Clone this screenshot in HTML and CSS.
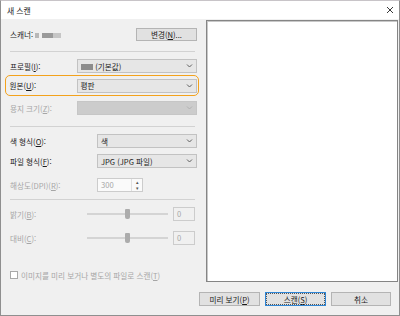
FILE: index.html
```html
<!DOCTYPE html>
<html lang="ko">
<head>
    <meta charset="UTF-8">
    <title>새 스캔</title>
    <link rel="stylesheet" href="styles.css">
</head>
<body>
    <div class="window">
        <div class="titlebar">
            <span class="title">새 스캔</span>
            <svg class="close" width="8" height="8" viewBox="0 0 8 8"><path d="M1 1l6 6M7 1l-6 6" stroke="#222" stroke-width="0.9" fill="none"/></svg>
        </div>
        <div class="main">
            <div class="settings">
                <div class="row scanner-row">
                    <span class="label">스캐너: <span class="blur-name"></span></span>
                    <button class="btn change-btn">변경(<u>N</u>)...</button>
                </div>
                <div class="sep"></div>

                <div class="row field">
                    <span class="label col-a">프로필(<u>I</u>):</span>
                    <div class="select"><span class="value"><span class="blur-block"></span> (기본값)</span><svg class="chev" width="7" height="4" viewBox="0 0 7 4"><path d="M1 .5l2.5 2.5L6 .5" stroke="#606060" fill="none"/></svg></div>
                </div>
                <div class="row highlight">
                    <span class="label col-a">원본(<u>U</u>):</span>
                    <div class="select"><span class="value">평판</span><svg class="chev" width="7" height="4" viewBox="0 0 7 4"><path d="M1 .5l2.5 2.5L6 .5" stroke="#606060" fill="none"/></svg></div>
                </div>
                <div class="row field paper-row">
                    <span class="label col-a disabled">용지 크기(<u>Z</u>):</span>
                    <div class="select off"><span class="value"></span><svg class="chev" width="7" height="4" viewBox="0 0 7 4"><path d="M1 .5l2.5 2.5L6 .5" stroke="#b0b0b0" fill="none"/></svg></div>
                </div>
                <div class="sep sep-2"></div>

                <div class="row field color-row">
                    <span class="label col-b">색 형식(<u>O</u>):</span>
                    <div class="select"><span class="value">색</span><svg class="chev" width="7" height="4" viewBox="0 0 7 4"><path d="M1 .5l2.5 2.5L6 .5" stroke="#606060" fill="none"/></svg></div>
                </div>
                <div class="row field file-row">
                    <span class="label col-b">파일 형식(<u>F</u>):</span>
                    <div class="select"><span class="value">JPG (JPG 파일)</span><svg class="chev" width="7" height="4" viewBox="0 0 7 4"><path d="M1 .5l2.5 2.5L6 .5" stroke="#606060" fill="none"/></svg></div>
                </div>
                <div class="row field dpi-row">
                    <span class="label col-b disabled">해상도(DPI)(<u>R</u>):</span>
                    <div class="spin">
                        <span class="spin-value">300</span>
                        <span class="spin-btns"><span>&#9652;</span><span>&#9662;</span></span>
                    </div>
                </div>
                <div class="sep sep-3"></div>

                <div class="row field bright-row">
                    <span class="label col-c disabled">밝기(<u>B</u>):</span>
                    <div class="slider"><span class="thumb"></span></div>
                    <div class="numbox">0</div>
                </div>
                <div class="row field contrast-row">
                    <span class="label col-c disabled">대비(<u>C</u>):</span>
                    <div class="slider"><span class="thumb"></span></div>
                    <div class="numbox">0</div>
                </div>

                <div class="row check-row">
                    <span class="checkbox"></span>
                    <span class="label disabled">이미지를 미리 보거나 별도의 파일로 스캔(<u>T</u>)</span>
                </div>
            </div>
            <div class="preview"></div>
        </div>
        <div class="footer">
            <button class="btn">미리 보기(<u>P</u>)</button>
            <button class="btn focused">스캔(<u>S</u>)</button>
            <button class="btn">취소</button>
        </div>
    </div>
</body>
</html>
```

FILE: styles.css
```css
body {
    margin: 0;
    padding: 0;
    background-color: #ffffff;
    font-family: "Noto Sans CJK KR", "Noto Sans", sans-serif;
    font-size: 7.6px;
    color: #1a1a1a;
}

.window {
    width: 400px;
    height: 316px;
    box-sizing: border-box;
    border: 1px solid #8f8f8f;
    border-top-color: #c8c4c8;
    background-color: #f0f0f0;
    display: flex;
    flex-direction: column;
}

.titlebar {
    height: 18px;
    background-color: #ffffff;
    display: flex;
    align-items: center;
    justify-content: space-between;
    padding: 0 5px 0 6px;
}

.title {
    font-size: 7.8px;
}

.close {
    display: block;
}

.main {
    height: 264px;
    display: flex;
}

.settings {
    width: 205px;
    box-sizing: border-box;
    padding: 8px 9px 0 9px;
    display: flex;
    flex-direction: column;
}

.row {
    display: flex;
    align-items: center;
}

.label {
    white-space: nowrap;
}

.label u,
.btn u {
    text-decoration-thickness: 0.5px;
    text-underline-offset: 1px;
}

.disabled {
    color: #a6a6a6;
}

.col-a { width: 67px; }
.col-b { width: 87px; }
.col-c { width: 77px; }

.scanner-row {
    height: 15px;
    justify-content: space-between;
}

.blur-name {
    display: inline-block;
    width: 26px;
    height: 5px;
    vertical-align: middle;
    background: linear-gradient(to right, #b8b8b8 0 14%, transparent 14% 26%, #9a9a9a 26% 70%, #c6c6c6 70% 100%);
    filter: blur(0.6px);
}

.btn {
    font-family: inherit;
    font-size: 7.6px;
    color: #1a1a1a;
    background-color: #e1e1e1;
    border: 1px solid #b4b4b4;
    padding: 0;
    height: 14px;
    width: 61px;
    box-sizing: border-box;
}

.change-btn {
    height: 13px;
}

.sep {
    height: 0;
    border-top: 1px solid #d2d2d2;
    margin-top: 9px;
    margin-right: 2px;
}

.sep-2 { margin-top: 11px; }
.sep-3 { margin-top: 7px; }

.field {
    height: 14px;
    margin-top: 7px;
}

.select {
    flex: 1;
    height: 14px;
    box-sizing: border-box;
    background-color: #e6e6e6;
    border: 1px solid #c2c2c2;
    display: flex;
    align-items: center;
    justify-content: space-between;
    padding: 0 3px 0 3px;
}

.select.off {
    background-color: #cccccc;
    border-color: #c6c6c6;
}

.chev {
    display: block;
}

.blur-block {
    display: inline-block;
    width: 12px;
    height: 6px;
    vertical-align: middle;
    background-color: #8c8c8c;
    filter: blur(0.6px);
}

.highlight {
    height: 21px;
    box-sizing: border-box;
    margin: 2px -2px 0 -5px;
    padding: 0 1px 0 3.5px;
    border: 1.5px solid #f3a21c;
    border-radius: 5px;
}

.paper-row { margin-top: 5px; }
.color-row { margin-top: 7px; }
.file-row { margin-top: 6px; }
.dpi-row { margin-top: 10px; }
.bright-row { margin-top: 7px; }
.contrast-row { margin-top: 10px; }

.spin {
    width: 46px;
    height: 14px;
    box-sizing: border-box;
    border: 1px solid #cccccc;
    background-color: #fafafa;
    display: flex;
    justify-content: space-between;
}

.spin-value {
    color: #a6a6a6;
    padding-left: 3px;
    line-height: 12px;
}

.spin-btns {
    width: 10px;
    border-left: 1px solid #e0e0e0;
    display: flex;
    flex-direction: column;
    align-items: center;
    font-size: 5px;
    line-height: 6px;
    color: #555;
}

.slider {
    width: 81px;
    height: 10px;
    position: relative;
    background: linear-gradient(#d4d4d4, #d4d4d4) center / 100% 2px no-repeat;
}

.thumb {
    position: absolute;
    left: 38px;
    top: 0;
    width: 5px;
    height: 10px;
    background-color: #acacac;
    border-radius: 1px 1px 2px 2px;
}

.numbox {
    width: 22px;
    height: 14px;
    box-sizing: border-box;
    margin-left: 5px;
    border: 1px solid #cccccc;
    color: #a6a6a6;
    padding-left: 3px;
    line-height: 12px;
}

.check-row {
    height: 12px;
    margin-top: 24px;
    gap: 3px;
}

.checkbox {
    width: 8px;
    height: 8px;
    box-sizing: border-box;
    border: 1px solid #a8a8a8;
    background-color: #ffffff;
}

.preview {
    width: 192px;
    height: 262px;
    margin-top: 1px;
    box-sizing: border-box;
    background-color: #ffffff;
    border: 1px solid #858585;
    box-shadow: inset 1px 1px 0 #c8c8c8;
}

.footer {
    flex: 1;
    display: flex;
    justify-content: flex-end;
    align-items: flex-start;
    gap: 5px;
    padding: 9px 8px 0 0;
}

.footer .btn:last-child {
    width: 60px;
}

.focused {
    border-color: #2f86d6;
    outline: 1px dotted #555;
    outline-offset: -2px;
}
```
